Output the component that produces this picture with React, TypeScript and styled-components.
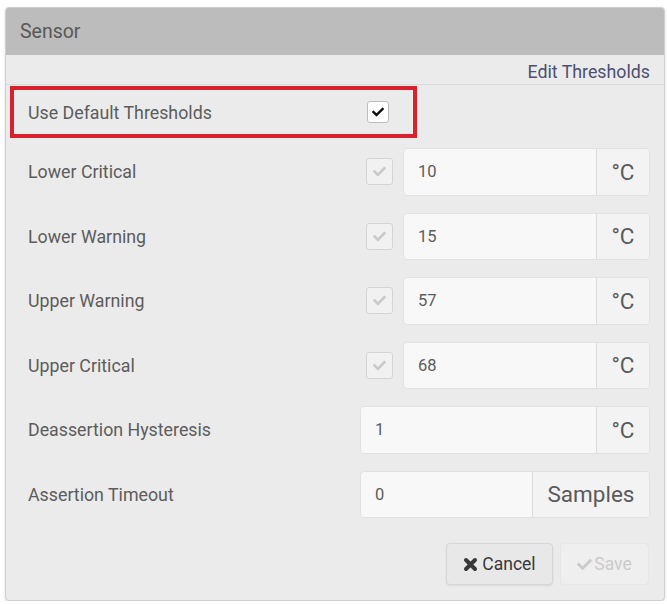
import styled, { createGlobalStyle } from 'styled-components';
import { FaCheck } from 'react-icons/fa';

const GlobalStyle = createGlobalStyle`
  html, body {
    margin: 0;
    padding: 0;
    background: #ffffff;
  }
  body {
    font-family: Roboto, "Liberation Sans", Arial, sans-serif;
    color: #5a5a5a;
  }
`;

const Panel = styled.section`
  margin: 7px 2px 0 5px;
  height: 594px;
  box-sizing: border-box;
  border: 1px solid #cfcfcf;
  border-radius: 4px;
  background: #ebebeb;
  box-shadow: 0 1px 3px rgba(0, 0, 0, 0.12);
  overflow: hidden;
  display: flex;
  flex-direction: column;
`;

const Header = styled.header`
  height: 47px;
  line-height: 47px;
  background: #bcbcbc;
  padding-left: 14px;
  font-size: 19.5px;
  color: #585858;
`;

const Toolbar = styled.div`
  height: 30px;
  box-sizing: border-box;
  border-bottom: 1px solid #d9d9d9;
  display: flex;
  justify-content: flex-end;
  align-items: center;
  padding: 4px 14px 0 0;
`;

const Link = styled.a`
  font-size: 17.8px;
  color: #4c5070;
  text-decoration: none;
  cursor: pointer;
`;

const DefaultRow = styled.div`
  margin: 1px 0 0 4px;
  width: 407px;
  height: 52px;
  box-sizing: border-box;
  border: 4px solid #d9212c;
  display: flex;
  align-items: center;
  padding-left: 14px;
`;

const Rows = styled.div`
  display: flex;
  flex-direction: column;
  gap: 17px;
  margin-top: 10px;
  padding: 0 14px 0 22px;
`;

const Row = styled.div`
  height: 47.5px;
  display: flex;
  align-items: center;
`;

const Label = styled.span<{ $width?: number }>`
  font-size: 17.8px;
  color: #5c5c5c;
  ${({ $width }) => ($width ? `width: ${$width}px;` : 'flex: 1;')}
`;

const Control = styled.div`
  width: 290px;
  height: 100%;
  display: flex;
  align-items: center;
`;

const Check = styled.span<{ $disabled?: boolean }>`
  box-sizing: border-box;
  display: inline-flex;
  align-items: center;
  justify-content: center;
  width: ${({ $disabled }) => ($disabled ? 27 : 22)}px;
  height: ${({ $disabled }) => ($disabled ? 27 : 22)}px;
  margin-left: ${({ $disabled }) => ($disabled ? 6 : 0)}px;
  border: 1px solid ${({ $disabled }) => ($disabled ? '#d4d4d4' : '#bdbdbd')};
  border-radius: 3px;
  background: ${({ $disabled }) => ($disabled ? '#f1f1f1' : '#ffffff')};
  color: ${({ $disabled }) => ($disabled ? '#cacaca' : '#111')};
  font-size: ${({ $disabled }) => ($disabled ? 13 : 12)}px;
  flex-shrink: 0;
`;

const InputGroup = styled.div<{ $withCheck?: boolean }>`
  flex: 1;
  height: 100%;
  box-sizing: border-box;
  margin-left: ${({ $withCheck }) => ($withCheck ? 10 : 0)}px;
  display: flex;
  border: 1px solid #e2e2e2;
  border-radius: 4px;
  background: #f8f8f8;
  overflow: hidden;
`;

const Value = styled.span`
  flex: 1;
  display: flex;
  align-items: center;
  padding-left: 14px;
  font-size: 16.5px;
  color: #5c5c5c;
`;

const Addon = styled.span<{ $width: number }>`
  width: ${({ $width }) => $width}px;
  box-sizing: border-box;
  border-left: 1px solid #dcdcdc;
  background: #f3f3f3;
  display: flex;
  align-items: center;
  justify-content: center;
  font-size: 22.5px;
  color: #5a5a5a;
`;

const Footer = styled.div`
  display: flex;
  justify-content: flex-end;
  gap: 7px;
  margin-top: 25px;
  padding-right: 15px;
`;

const Button = styled.button<{ $disabled?: boolean }>`
  height: 42px;
  box-sizing: border-box;
  padding: 0 12px;
  display: inline-flex;
  align-items: center;
  justify-content: center;
  border-radius: 4px;
  font-family: Roboto, "Liberation Sans", Arial, sans-serif;
  font-size: 17.5px;
  border: 1px solid ${({ $disabled }) => ($disabled ? '#e6e6e6' : '#d6d6d6')};
  background: ${({ $disabled }) => ($disabled ? '#efefef' : '#e8e8e8')};
  color: ${({ $disabled }) => ($disabled ? '#cbcbcb' : '#383838')};
  box-shadow: ${({ $disabled }) => ($disabled ? 'none' : '0 1px 2px rgba(0,0,0,0.08)')};
  cursor: ${({ $disabled }) => ($disabled ? 'default' : 'pointer')};
`;

const CancelButton = styled(Button)`
  width: 107px;
  gap: 4px;
`;

const SaveButton = styled(Button)`
  width: 89px;
  gap: 2px;
`;

const CrossIcon = () => (
  <svg width="15" height="15" viewBox="0 0 15 15" aria-hidden="true">
    <path
      d="M3 3 L12 12 M12 3 L3 12"
      stroke="currentColor"
      strokeWidth="4"
      strokeLinecap="round"
      fill="none"
    />
  </svg>
);

type Threshold = {
  label: string;
  value: string;
  unit: string;
  check?: boolean;
  unitWidth?: number;
};

const thresholds: Threshold[] = [
  { label: 'Lower Critical', value: '10', unit: '°C', check: true },
  { label: 'Lower Warning', value: '15', unit: '°C', check: true },
  { label: 'Upper Warning', value: '57', unit: '°C', check: true },
  { label: 'Upper Critical', value: '68', unit: '°C', check: true },
  { label: 'Deassertion Hysteresis', value: '1', unit: '°C' },
  { label: 'Assertion Timeout', value: '0', unit: 'Samples', unitWidth: 117 },
];

export default function App() {
  return (
    <>
      <GlobalStyle />
      <Panel>
        <Header>Sensor</Header>
        <Toolbar>
          <Link>Edit Thresholds</Link>
        </Toolbar>
        <DefaultRow>
          <Label $width={339}>Use Default Thresholds</Label>
          <Check>
            <FaCheck />
          </Check>
        </DefaultRow>
        <Rows>
          {thresholds.map((t) => (
            <Row key={t.label}>
              <Label>{t.label}</Label>
              <Control>
                {t.check && (
                  <Check $disabled>
                    <FaCheck />
                  </Check>
                )}
                <InputGroup $withCheck={t.check}>
                  <Value>{t.value}</Value>
                  <Addon $width={t.unitWidth ?? 53}>{t.unit}</Addon>
                </InputGroup>
              </Control>
            </Row>
          ))}
        </Rows>
        <Footer>
          <CancelButton>
            <CrossIcon />
            Cancel
          </CancelButton>
          <SaveButton $disabled>
            <FaCheck size={15} />
            Save
          </SaveButton>
        </Footer>
      </Panel>
    </>
  );
}
